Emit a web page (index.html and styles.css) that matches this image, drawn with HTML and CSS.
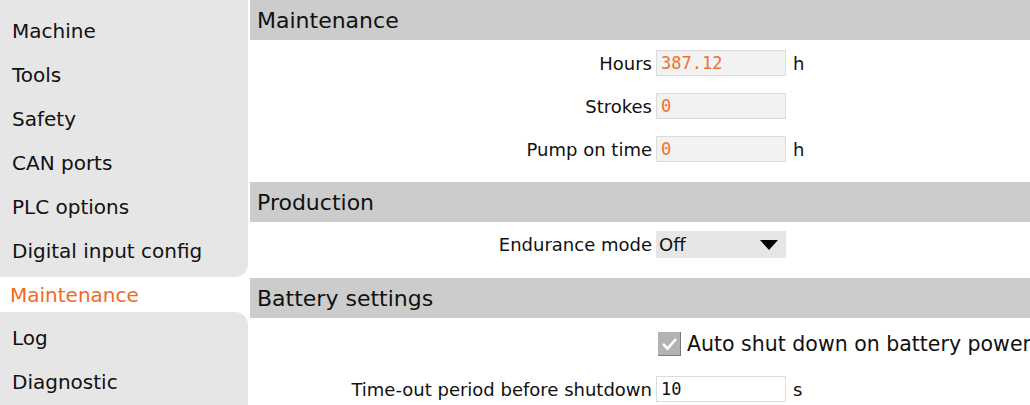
FILE: index.html
```html
<!DOCTYPE html>
<html>
<head>
<meta charset="utf-8">
<link rel="stylesheet" href="styles.css">
</head>
<body>
<div class="app">
  <nav class="sidebar">
    <div class="nav-item first">Machine</div>
    <div class="nav-item">Tools</div>
    <div class="nav-item">Safety</div>
    <div class="nav-item">CAN ports</div>
    <div class="nav-item">PLC options</div>
    <div class="nav-item before-active">Digital input config</div>
    <div class="nav-item active">Maintenance</div>
    <div class="nav-item after-active">Log</div>
    <div class="nav-item last">Diagnostic</div>
  </nav>
  <main class="content">
    <section class="section">
      <h2 class="section-title">Maintenance</h2>
      <div class="form first-form">
        <label class="label">Hours</label>
        <div class="field value">387.12</div>
        <span class="unit">h</span>
        <label class="label">Strokes</label>
        <div class="field value">0</div>
        <span class="unit"></span>
        <label class="label">Pump on time</label>
        <div class="field value">0</div>
        <span class="unit">h</span>
      </div>
    </section>
    <section class="section">
      <h2 class="section-title">Production</h2>
      <div class="form prod-form">
        <label class="label">Endurance mode</label>
        <div class="select"><span>Off</span><svg class="arrow" width="18" height="10" viewBox="0 0 18 10"><path d="M0 0H18L9 10Z" fill="#000"/></svg></div>
        <span class="unit"></span>
      </div>
    </section>
    <section class="section">
      <h2 class="section-title">Battery settings</h2>
      <div class="check-row">
        <span class="checkbox"><svg width="23" height="23" viewBox="0 0 23 23"><path d="M5 12 L9.5 16.5 L18 7" fill="none" stroke="#fff" stroke-width="2.6"/></svg></span>
        <span class="check-label">Auto shut down on battery power</span>
      </div>
      <div class="form battery-form">
        <label class="label">Time-out period before shutdown</label>
        <div class="field value dark">10</div>
        <span class="unit">s</span>
      </div>
    </section>
  </main>
</div>
</body>
</html>
```

FILE: styles.css
```css
* { box-sizing: border-box; }
html, body { margin: 0; padding: 0; background: #fff; }
body {
  font-family: "DejaVu Sans", sans-serif;
  color: #111;
  width: 1030px;
  height: 405px;
  overflow: hidden;
}
.app {
  display: flex;
  height: 405px;
  gap: 2px;
}
.sidebar {
  width: 248px;
  flex: none;
  display: flex;
  flex-direction: column;
}
.nav-item {
  height: 44px;
  flex: none;
  display: flex;
  align-items: center;
  padding-left: 12px;
  background: #e6e6e6;
  font-size: 20px;
  white-space: nowrap;
}
.nav-item.first { height: 53px; padding-top: 9px; }
.nav-item.before-active { height: 48px; padding-bottom: 4px; border-bottom-right-radius: 13px; }
.nav-item.active {
  height: 35px;
  margin-left: 8px;
  padding-left: 2px;
  background: #fff;
  color: #f26a22;
}
.nav-item.after-active { height: 48px; padding-top: 4px; border-top-right-radius: 13px; }
.nav-item.last { flex: 1; padding-bottom: 2px; }

.content {
  flex: 1;
  display: flex;
  flex-direction: column;
}
.section-title {
  margin: 0;
  height: 40px;
  background: #cccccc;
  font-weight: normal;
  font-size: 22px;
  padding-left: 7px;
  display: flex;
  align-items: center;
}
.form {
  display: grid;
  grid-template-columns: 406px 130px 1fr;
  align-items: center;
  row-gap: 17px;
}
.first-form { padding: 10px 0 20px; }
.prod-form { padding: 9px 0 20px; }
.battery-form { padding: 20px 0 0; }
.label {
  text-align: right;
  padding-right: 4px;
  font-size: 18px;
  white-space: nowrap;
}
.field {
  height: 26px;
  background: #f2f2f2;
  border: 1px solid #dcdcdc;
  display: flex;
  align-items: center;
  padding-left: 4px;
  font-family: "DejaVu Sans Mono", monospace;
  font-size: 17px;
  color: #f07030;
}
.field.dark { background: #fff; color: #111; }
.unit { padding-left: 7px; font-size: 18px; }
.select {
  height: 27px;
  background: #e6e6e6;
  display: flex;
  align-items: center;
  justify-content: space-between;
  padding: 0 8px 0 3px;
  font-size: 18px;
}
.arrow { display: block; }
.check-row {
  display: flex;
  align-items: center;
  padding: 14px 0 0 408px;
  gap: 6px;
}
.checkbox {
  width: 23px;
  height: 24px;
  background: #b3b3b3;
  border-right: 1px solid #7a7a7a;
  border-bottom: 1px solid #7a7a7a;
  display: block;
}
.checkbox svg { display: block; }
.check-label {
  font-size: 20.5px;
  white-space: nowrap;
}
```
